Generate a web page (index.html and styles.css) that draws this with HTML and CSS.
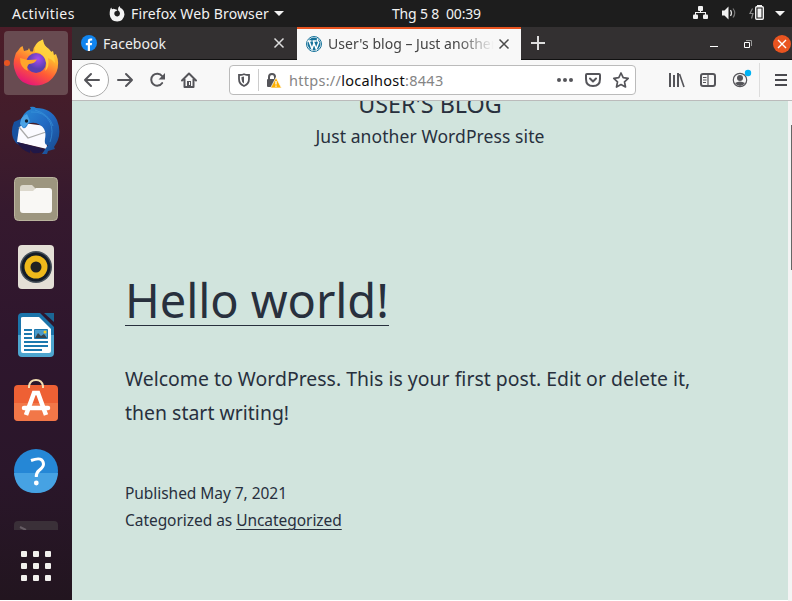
FILE: index.html
```html
<!DOCTYPE html>
<html lang="en">
<head>
<meta charset="utf-8">
<title>User's blog – Just another WordPress site</title>
<link rel="stylesheet" href="styles.css">
</head>
<body>
<div class="desktop">
  <header class="topbar">
    <span class="activities">Activities</span>
    <svg class="fx-symbolic" width="16" height="16" viewBox="0 0 16 16"><path fill="#f2f2f2" d="M1 4.200Q1.500 2 2.300 1.500L3 3.200Q4.200 2.500 5.500 3L8.500 4Q7.500 5.200 6 5.500Q4.800 7 5.500 8.800Q6.500 10.800 8.600 10.500Q11 10 11 7.600Q11 5.500 9 4.200Q8.800 1.500 10.500 0Q11.200 2.400 13 2.800Q15.700 5 15.500 8.500Q14.700 15 8.200 15.500Q1.200 15 .7 8.500Q.6 6 1 4.200Z"/></svg>
    <span class="appname">Firefox Web Browser</span>
    <span class="caret"></span>
    <span class="clock">Thg 5 8&nbsp; 00:39</span>
    <svg class="tray" width="100" height="27" viewBox="692 0 100 27">
      <g fill="#f2f2f2"><rect x="698" y="6" width="5" height="5" rx="1"/><rect x="693" y="14.500" width="5" height="4.500" rx="1"/><rect x="703" y="14.500" width="5" height="4.500" rx="1"/><path d="M700 10h1v2h5v3h-1v-2h-9v2h-1v-3h5z"/>
      <path d="M722 10.500h2.500l4-4v13l-4-4H722z"/></g>
      <path d="M730.500 10q2 3 0 6" fill="none" stroke="#ddd" stroke-width="1.300"/><path d="M733 8.500q3.500 4.500 0 9" fill="none" stroke="#777" stroke-width="1.200"/>
      <path d="M752.500 8.500l-2.500 5h3l-1.500 5" fill="none" stroke="#888" stroke-width="1.200"/>
      <rect x="755.700" y="6.700" width="7.600" height="12.600" rx="1" fill="none" stroke="#f2f2f2" stroke-width="1.400"/><path fill="#f2f2f2" d="M757 5h5v1.500h-5zM757.500 8.500h4v9h-4zM775 11h10l-5 5z"/>
    </svg>
  </header>

  <div class="workspace">
    <aside class="dock">
      <div class="tile active"><span class="running"></span>
        <svg width="48" height="48" viewBox="0 0 48 48"><defs><linearGradient id="fa" x1=".8" y1="0" x2=".3" y2="1"><stop offset="0" stop-color="#fff44f"/><stop offset=".35" stop-color="#ffb02e"/><stop offset=".65" stop-color="#ff5a36"/><stop offset="1" stop-color="#e3127c"/></linearGradient><radialGradient id="fb" cx=".6" cy=".3"><stop offset="0" stop-color="#a64bf0"/><stop offset="1" stop-color="#593fae"/></radialGradient></defs>
        <path fill="url(#fa)" d="M3 17Q4 13 6.500 11Q8 8 10.500 7L12 12L16 11L17 9L18.500 12.500H21Q22 4 31 .5Q31 6 36 9.500L39 13L41 12L42 16L44 15Q48 24 44.500 33Q38 46 24 46.500Q8 46 3.500 33Q0 25 3 17Z"/><circle cx="24" cy="24" r="10" fill="url(#fb)"/><path fill="#ffa52b" d="M8 19L16 21L25 20.500Q23 24.500 17 25Q14 28 16 32Q8 29 8 19Z"/><path fill="#ffd23e" d="M23 13Q22 4 31 .5Q31 6 37 10Q43 16 43 24Q40 20 36 19Q38 28 33 32Q36 24 32 18Q28 13 23 13Z" opacity=".85"/></svg></div>
      <div class="tile"><svg width="50" height="50" viewBox="0 0 50 50"><defs><linearGradient id="tb" x1="0" y1="0" x2="1" y2="1"><stop offset="0" stop-color="#2a8ed8"/><stop offset=".5" stop-color="#2269c2"/><stop offset="1" stop-color="#174789"/></linearGradient></defs><path fill="#1751a0" d="M3 16Q-2 28 5 37L10 40L12 12Z"/><path fill="#fafaff" d="M8 22L12 17L35 20L36 43L6 36Z"/><path d="M8 21L17 32L35 26" fill="none" stroke="#aaa" stroke-width="1.300"/><path fill="#201747" d="M6 36L35 43.500Q30 48 22 47L19 44V47Q10 44 6 36Z"/><path fill="url(#tb)" d="M9 18Q11 6 20 3L19 1Q23 0 25 2Q40 2 46 14Q52 29 43 41L44 43L37 45L36 48L31 48L37 39Q33 39 34 33Q36 23 29 19Q23 15 17 18Q15 23 12 22Z"/><path fill="#4ba3e6" d="M9 18Q10 10 16 8L19 15L13 22Z"/><path d="M20 6Q33 5 39 16Q43 25 39 36M24 4Q38 8 42 20" fill="none" stroke="#3c9add" opacity=".6"/><circle cx="15.500" cy="15" r="1.700" fill="#123"/></svg></div>
      <div class="tile"><svg width="46" height="46" viewBox="0 0 46 46"><rect x="1.500" y="1.500" width="43" height="43" rx="4" fill="#9d967f" stroke="#bab49e"/><path fill="#dcd8cc" d="M7 12q0-3 3-3h9l4 4v8H7z"/><path fill="#f9f8f5" d="M7 15h13l3-3h13q3 0 3 3v19q0 3-3 3H10q-3 0-3-3z"/></svg></div>
      <div class="tile"><svg width="38" height="46" viewBox="0 0 38 46"><rect x="1" y="1" width="36" height="44" rx="4" fill="#e4dfd6"/><circle cx="19" cy="23" r="16" fill="#46505a"/><circle cx="19" cy="23" r="14.500" fill="#141c27"/><circle cx="19" cy="23" r="11.500" fill="#efb91b"/><circle cx="19" cy="23" r="5.500" fill="#222"/></svg></div>
      <div class="tile"><svg width="38" height="46" viewBox="0 0 38 46"><path fill="#1b6695" d="M27 1h10v9z"/><path fill="#1b74aa" d="M1 5Q1 1 5 1H23L37 15V23H1z"/><path fill="#4da5cf" d="M1 23H37V41Q37 45 33 45H5Q1 45 1 41z"/><path fill="#fff" d="M4 6Q4 5 6 5H22L34 17V39Q34 41 32 41H6Q4 41 4 39z"/><path stroke="#1c78ae" stroke-width="2" d="M7 18h8M7 22h8M7 26h8M7 30h24M7 34h24M7 38h18"/><path fill="#4a9bcb" stroke="#1c78ae" d="M17.500 17.500h13v9h-13z"/><path fill="#35444d" d="M18 26l3-5 3 3 3-2 3 4z"/><circle cx="28" cy="20" r="1.500" fill="#f5cf24"/></svg></div>
      <div class="tile"><svg class="bag" width="46" height="46" viewBox="0 0 46 46"><rect x="1" y="8" width="44" height="36" rx="4" fill="#ee6034"/><path fill="#f58453" opacity=".65" d="M1 26h44v14q0 4-4 4H5q-4 0-4-4z"/><path d="M16 11V9Q17 3 23 3T30 9V11" fill="none" stroke="#f4deb2" stroke-width="2"/><path d="M13 38L21 16H25L33 38" fill="none" stroke="#fff" stroke-width="4.500"/><path d="M11 31H35" stroke="#fff" stroke-width="4.500" stroke-linecap="round"/></svg></div>
      <div class="tile"><svg width="46" height="46" viewBox="0 0 46 46"><circle cx="23" cy="23" r="22" fill="#2587d6"/><path fill="#46a2e3" d="M1 25H45Q43 45 23 45T1 25Z"/><path d="M18 12.500Q30 8 30.500 16Q30.500 19 26 22.500Q23 25 23.300 29" fill="none" stroke="#fff" stroke-width="3"/><circle cx="23.300" cy="35" r="2.400" fill="#fff"/></svg></div>
      <div class="terminal"><svg width="44" height="9" viewBox="0 0 44 9"><path fill="#3a3038" d="M0 9V4Q0 0 4 0H40Q44 0 44 4V9z"/><path d="M6 6l6 3" stroke="#665d64" stroke-width="2"/></svg></div>
      <div class="apps"><i></i><i></i><i></i><i></i><i></i><i></i><i></i><i></i><i></i></div>
    </aside>

    <main class="browser">
      <div class="tabs">
        <div class="tab"><svg width="16" height="16" viewBox="0 0 16 16"><circle cx="8" cy="8" r="8" fill="#1185ef"/><path fill="#fff" d="M6.800 16V10.300H4.800V8H6.800V6.200Q6.800 3.500 9.500 3.500H11.200V5.500H10Q9 5.500 9 6.600V8h2.100l-.4 2.300H9V16z"/></svg><span class="label">Facebook</span><svg class="close" width="12" height="12" viewBox="0 0 12 12"><path d="M1.500 1.500l9 9m0-9l-9 9" stroke="#ddd" stroke-width="1.500"/></svg></div>
        <div class="tab selected"><svg width="16" height="16" viewBox="0 0 16 16"><circle cx="8" cy="8" r="7.500" fill="#fff" stroke="#16729a"/><circle cx="8" cy="8" r="6.500" fill="#16729a"/><path d="M1.500 5h4M6.500 5h4M3 5l3 8L8 7M7.200 5l3 8 2.500-6.500Q11 5 11.500 3" fill="none" stroke="#fff" stroke-width="1.500"/></svg><span class="label">User's blog – Just another</span><svg class="close" width="12" height="12" viewBox="0 0 12 12"><path d="M1.500 1.500l9 9m0-9l-9 9" stroke="#4a4a4a" stroke-width="1.500"/></svg></div>
        <svg class="controls" width="271" height="33" viewBox="521 27 271 33"><path d="M521 59.500h271" stroke="#111"/><path d="M531 43h14M538 36v14" stroke="#ddd" stroke-width="2"/><path d="M710 46.500h8" stroke="#fff"/><path d="M744.500 42.500h5v5h-5z" fill="none" stroke="#fff"/><path d="M746 40.500h5.500v5.500" fill="none" stroke="#999"/><circle cx="782" cy="44" r="9" fill="#e95420"/><path d="M778 40l8 8m0-8l-8 8" stroke="#fff" stroke-width="1.400"/></svg>
      </div>
      <div class="toolbar">
        <svg class="nav" width="157" height="40" viewBox="72 60 157 40"><circle cx="92" cy="80" r="16.500" fill="#fff" stroke="#aaa"/><g fill="none" stroke="#55555a" stroke-width="2" stroke-linecap="round" stroke-linejoin="round"><path d="M99 80H85m6-6l-6 6 6 6M118 80h14m-6-6l6 6-6 6"/><path d="M162 76a6 6 0 1 0 .2 7"/><path d="M182 80.500l7-7 7 7M184.500 79v8h9v-8"/></g><path fill="#55555a" d="M187 81h4v6h-4zM158.500 79.500l6.500-6.500v6.500z"/><path stroke="#f8f8f8" d="M189.500 82v3"/></svg>
        <div class="urlbar">
          <svg width="55" height="30" viewBox="230 65 55 30"><path d="M239 75q5 0 5-1.500 0 1.500 5 1.500v4q0 5-5 7-5-2-5-7z" fill="none" stroke="#55555a" stroke-width="1.800"/><path fill="#55555a" d="M244 76.500v7q-2.500-1.500-2.500-4.500V77z"/><path d="M258.500 69v22" stroke="#ccc"/><path d="M269 80v-3a3 3 0 0 1 6 0v2" fill="none" stroke="#55555a" stroke-width="2"/><rect x="267" y="79" width="9" height="8" rx="1" fill="#55555a"/><path fill="#ffb000" stroke="#fff" stroke-width=".7" d="M276 77.500l5.500 10.500h-11z"/><path d="M276 81v3.500m0 1v1.200" stroke="#fff" stroke-width="1.300"/></svg>
          <span class="url">https://<b>localhost</b>:8443</span>
          <svg class="actions" width="84" height="30" viewBox="552 65 84 30"><g fill="#55555a"><circle cx="560" cy="80" r="2"/><circle cx="566" cy="80" r="2"/><circle cx="572" cy="80" r="2"/></g><g fill="none" stroke="#55555a" stroke-width="2" stroke-linejoin="round" stroke-linecap="round"><path d="M588 74h12q1 0 1 1v4q0 7-7 7t-7-7v-4q0-1 1-1zM591 78.500l3 3 3-3"/><path stroke-width="1.700" d="M622 73l2.200 4.700 5 .6-3.700 3.500 1 5.200-4.500-2.500-4.500 2.500 1-5.200-3.700-3.500 5-.6z"/></g></svg>
        </div>
        <svg class="tools" width="156" height="40" viewBox="636 60 156 40"><path d="M670 73v14M674 75v12M678 73v14" stroke="#55555a" stroke-width="2"/><path d="M679.500 74l4.500 13" stroke="#55555a" stroke-width="1.600"/><rect x="701" y="74" width="14" height="12" rx="2" fill="none" stroke="#55555a" stroke-width="2"/><path d="M708 74v12M703 77.500h3.500M703 80h3.500M703 82.500h3" stroke="#55555a" stroke-width="1.200"/><circle cx="740" cy="80" r="6.700" fill="none" stroke="#55555a" stroke-width="1.200"/><circle cx="740" cy="78" r="3" fill="#55555a"/><path fill="#55555a" d="M735 83q5-3 10 0-2 3-5 3t-5-3z"/><circle cx="748" cy="73" r="3.200" fill="#00b3f4"/><path d="M759.500 63v34" stroke="#ddd"/><path d="M775 75h12M775 80h12M775 85h12" stroke="#4a4a4f" stroke-width="2"/></svg>
      </div>
      <div class="viewport">
        <article class="page">
          <div class="site-title">USER'S BLOG</div>
          <p class="tagline">Just another WordPress site</p>
          <h1><span class="hello">Hello world!</span></h1>
          <p class="body">Welcome to WordPress. This is your first post. Edit or delete it,<br>then start writing!</p>
          <p class="meta">Published May 7, 2021<br>Categorized as <a>Uncategorized</a></p>
        </article>
        <div class="scroll"><i></i></div>
      </div>
    </main>
  </div>
</div>
</body>
</html>
```
FILE: styles.css
```css
* { box-sizing: border-box; }
body { margin: 0; font-family: "Noto Sans", sans-serif; overflow: hidden; }
svg { display: block; flex: none; }
.desktop { width: 792px; height: 601px; display: flex; flex-direction: column; background: #fff; }
.topbar { height: 27px; background: #1d1d1d; color: #f2f2f2; display: flex; align-items: center; font-size: 14px; white-space: nowrap; }
.activities { width: 97px; padding-left: 12px; letter-spacing: .45px; }
.fx-symbolic { margin-left: 12px; }
.appname { width: 139px; margin-left: 6px; letter-spacing: .13px; }
.caret { border: 5px solid transparent; border-top-color: #f2f2f2; border-bottom: 0; margin-left: 4px; }
.clock { margin-left: 108px; width: 92px; letter-spacing: -.18px; }
.tray { margin-left: auto; }
.workspace { display: flex; height: 574px; }
.dock { width: 72px; height: 574px; padding-top: 4px; display: flex; flex-direction: column; align-items: center; background: linear-gradient(#4c1c28 0, #421d2b 16%, #35192e 32%, #2e162d 55%, #2a162a 78%, #22151f 100%); border-bottom: 1px solid #fff; }
.tile { width: 64px; height: 64px; margin-bottom: 4px; display: flex; align-items: center; justify-content: center; flex: none; position: relative; }
.tile.active { background: #684b51; border-radius: 4px; }
.running { position: absolute; left: 0; top: 29px; width: 6px; height: 6px; border-radius: 50%; background: #e95420; }
.bag { margin-bottom: 6px; }
.terminal { padding-top: 14px; }
.apps { display: grid; grid-template-columns: repeat(3, 6px); gap: 6px; margin-top: 21px; }
.apps i { width: 6px; height: 6px; border-radius: 1px; background: #f2f0ee; }
.browser { width: 720px; display: flex; flex-direction: column; }
.tabs { height: 33px; display: flex; background: #333031; }
.tab { width: 225px; display: flex; align-items: center; padding-left: 9px; border-bottom: 1px solid #111; color: #eee; font-size: 14px; }
.tab.selected { width: 224px; padding-bottom: 2px; background: #f8f8f8; color: #444; border-top: 2px solid #e95420; border-bottom: 0; }
.label { width: 166px; margin-left: 6px; overflow: hidden; white-space: nowrap; letter-spacing: .02px; }
.selected .label { -webkit-mask-image: linear-gradient(90deg, #000 78%, transparent); mask-image: linear-gradient(90deg, #000 78%, transparent); }
.close { margin-left: 4px; }
.toolbar { height: 41px; display: flex; background: #f8f8f8; border-bottom: 1px solid #bbb; }
.urlbar { width: 407px; height: 30px; margin-top: 5px; border: 1px solid #bbb; border-radius: 4px; background: #fff; display: flex; align-items: center; }
.url { width: 266px; margin-left: 4px; font-size: 14.500px; letter-spacing: .28px; color: #858585; }
.url b { font-weight: 400; color: #0c0c0d; }
.viewport { height: 500px; display: flex; overflow: hidden; }
.page { width: 716px; height: 499px; background: #d1e4dd; color: #28303d; overflow: hidden; padding: 0 53px; white-space: nowrap; }
.site-title { height: 20px; margin-top: -10px; font-size: 23.300px; line-height: 26px; text-align: center; }
.tagline { margin: 12px 0 0; height: 26px; line-height: 26px; font-size: 17.500px; letter-spacing: .09px; text-align: center; }
h1 { margin: 124px 0 0; height: 55px; font-weight: 400; font-size: 47px; letter-spacing: -.08px; line-height: 55px; }
.hello { display: inline-block; height: 53px; border-bottom: 1px solid #28303d; }
.body { margin: 34px 0 0; font-size: 19.400px; letter-spacing: .03px; line-height: 34px; }
.meta { margin: 50px 0 0; font-size: 15.500px; letter-spacing: -.05px; line-height: 27px; }
.meta a { text-decoration: underline; text-decoration-thickness: 1px; text-underline-offset: 3px; }
.scroll { width: 4px; background: #f4f4f4; padding: 24px 0 0 3px; }
.scroll i { display: block; width: 1px; height: 145px; background: #666; }
```
